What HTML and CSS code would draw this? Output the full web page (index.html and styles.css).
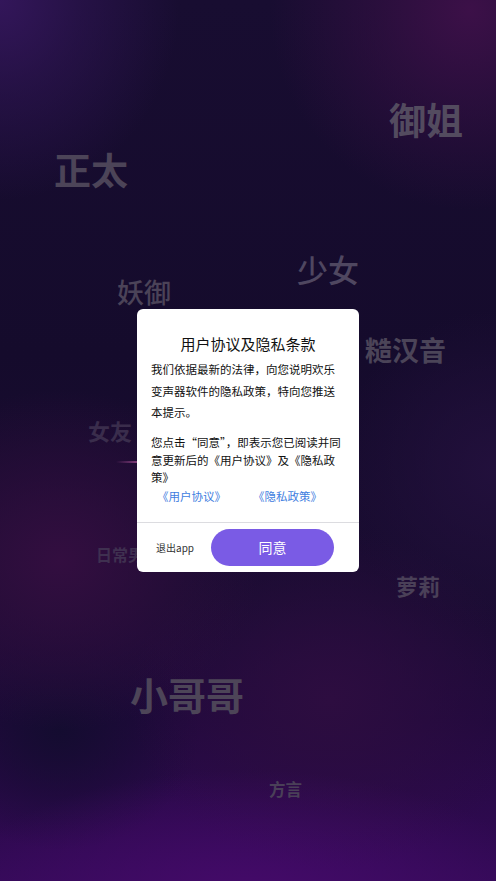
FILE: index.html
```html
<!DOCTYPE html>
<html lang="zh-CN">
<head>
<meta charset="utf-8">
<title>用户协议及隐私条款</title>
<link rel="stylesheet" href="styles.css">
</head>
<body>
<div class="screen">
  <div class="tags">
    <span class="tag t-yujie">御姐</span>
    <span class="tag t-zhengtai">正太</span>
    <span class="tag t-shaonv">少女</span>
    <span class="tag t-yaoyu">妖御</span>
    <span class="tag t-caohan">糙汉音</span>
    <span class="tag t-nvyou">女友</span>
    <span class="streak"></span>
    <span class="tag t-richang">日常男声</span>
    <span class="tag t-luoli">萝莉</span>
    <span class="tag t-xiaogege">小哥哥</span>
    <span class="tag t-fangyan">方言</span>
  </div>
  <div class="overlay">
    <div class="dialog">
      <h1 class="title">用户协议及隐私条款</h1>
      <p class="para p1">我们依据最新的法律，向您说明欢乐<br>变声器软件的隐私政策，特向您推送<br>本提示。</p>
      <p class="para p2">您点击“同意”，即表示您已阅读并同<br>意更新后的《用户协议》及《隐私政<br>策》</p>
      <div class="links">
        <a class="link">《用户协议》</a>
        <a class="link">《隐私政策》</a>
      </div>
      <div class="footer">
        <span class="exit">退出app</span>
        <button class="agree">同意</button>
      </div>
    </div>
  </div>
</div>
</body>
</html>
```
FILE: styles.css
```css
* { box-sizing: border-box; }
html, body { margin: 0; padding: 0; }
body {
  font-family: "Noto Sans CJK SC", "Noto Sans", sans-serif;
  width: 496px;
  height: 881px;
  overflow: hidden;
}
.screen {
  position: relative;
  width: 496px;
  height: 881px;
  background:
    radial-gradient(ellipse 300px 130px at 248px 900px, #450a6a 0%, rgba(69,10,106,0.55) 45%, rgba(69,10,106,0) 100%),
    radial-gradient(ellipse 200px 200px at 470px 10px, #3c1048 0%, rgba(60,16,72,0.5) 45%, rgba(60,16,72,0) 100%),
    radial-gradient(ellipse 180px 200px at 0px 0px, #33165a 0%, rgba(51,22,90,0.5) 45%, rgba(51,22,90,0) 100%),
    radial-gradient(ellipse 200px 170px at 60px 560px, #330e40 0%, rgba(51,14,64,0.5) 50%, rgba(51,14,64,0) 100%),
    radial-gradient(ellipse 200px 170px at 330px 700px, #2d0d40 0%, rgba(45,13,64,0) 100%),
    radial-gradient(ellipse 160px 160px at 496px 470px, #22103c 0%, rgba(34,16,60,0) 100%),
    radial-gradient(ellipse 140px 120px at 60px 730px, #140c30 0%, rgba(20,12,48,0) 100%),
    linear-gradient(180deg, #180d31 0%, #150b2c 40%, #1a0c32 68%, #22093e 82%, #340a58 100%);
}
.tags { position: absolute; inset: 0; }
.tag {
  position: absolute;
  font-weight: 700;
  color: #4f4760;
  line-height: 1;
  white-space: nowrap;
}
.t-yujie { left: 389px; top: 101px; font-size: 37px; color: #534b5f; }
.t-zhengtai { left: 54px; top: 151px; font-size: 37px; color: #4c4458; }
.t-shaonv { left: 297px; top: 253px; font-size: 31px; color: #4f4760; font-weight: 500; }
.t-yaoyu { left: 117px; top: 278px; font-size: 27px; color: #4b4358; font-weight: 500; }
.t-caohan { left: 365px; top: 336px; font-size: 27px; color: #4b4458; }
.t-nvyou { left: 88px; top: 419px; font-size: 22px; color: #3a2d4c; }
.t-richang { left: 96px; top: 546px; font-size: 16px; color: #3f3050; }
.t-luoli { left: 396px; top: 574px; font-size: 22px; color: #4a4058; }
.t-xiaogege { left: 130px; top: 675px; font-size: 38px; color: #4d4558; }
.t-fangyan { left: 269px; top: 781px; font-size: 16.5px; color: #4a4058; }
.streak {
  position: absolute;
  left: 116px; top: 461px;
  width: 24px; height: 1.5px;
  background: linear-gradient(90deg, rgba(140,60,130,0), rgba(170,80,150,0.8));
}
.overlay {
  position: absolute;
  inset: 0;
  display: flex;
  align-items: center;
  justify-content: center;
}
.dialog {
  width: 222px;
  height: 263px;
  background: #fff;
  border-radius: 6px;
  padding-top: 24px;
  display: flex;
  flex-direction: column;
  overflow: hidden;
}
.title {
  margin: 0;
  font-size: 15px;
  font-weight: 400;
  line-height: 22px;
  text-align: center;
  color: #111;
}
.para {
  margin: 0;
  padding: 0 14px;
  font-size: 11.5px;
  color: #111;
  white-space: nowrap;
}
.p1 { margin-top: 4px; line-height: 21.5px; }
.p2 { margin-top: 10.5px; line-height: 17.5px; }
.links {
  display: flex;
  gap: 27px;
  padding-left: 20px;
  margin-top: 1.5px;
  font-size: 11.5px;
  line-height: 17.5px;
}
.link { color: #3f7ee0; }
.footer {
  margin-top: 16px;
  border-top: 1px solid #dcdce0;
  height: 50px;
  display: flex;
  align-items: center;
  padding-left: 19px;
}
.exit {
  width: 55px;
  font-size: 10px;
  color: #333;
}
.agree {
  width: 123px;
  height: 37px;
  border: none;
  border-radius: 19px;
  background: #7a5be5;
  color: #fff;
  font-family: inherit;
  font-size: 14px;
  padding: 0;
}
```
